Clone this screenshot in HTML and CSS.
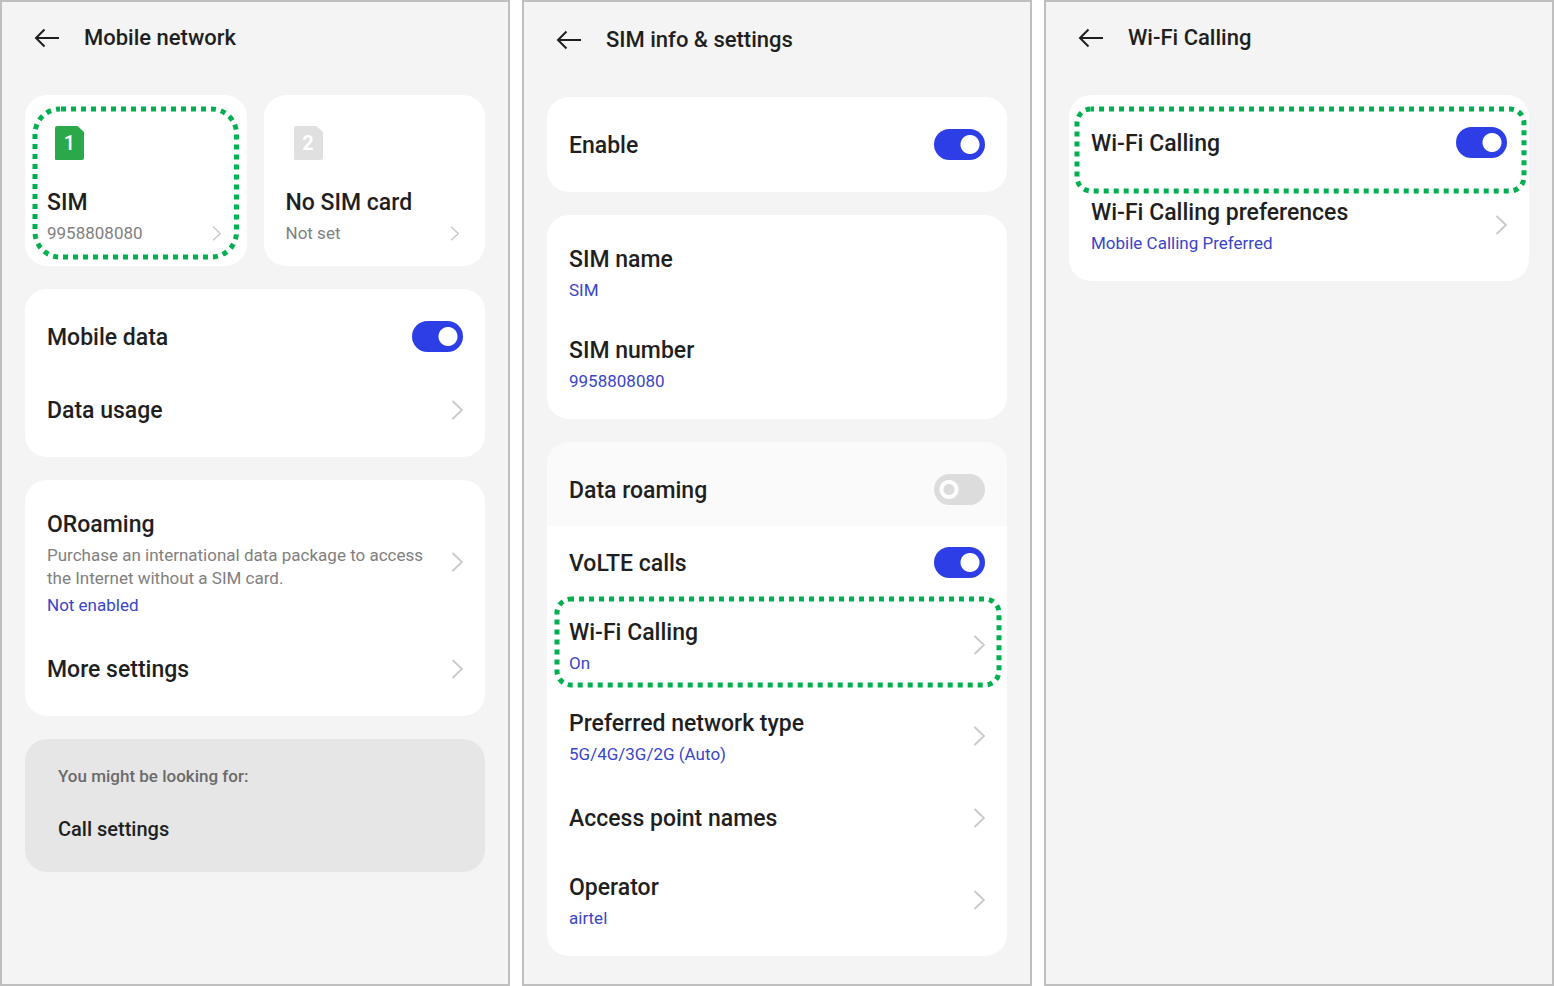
FILE: index.html
```
<!DOCTYPE html>
<html lang="en">
<head>
<meta charset="utf-8">
<meta name="viewport" content="width=device-width, initial-scale=1">
<title>Wi-Fi Calling setup</title>
<link rel="stylesheet" href="styles.css">
</head>
<body>
<svg class="defs" aria-hidden="true">
  <symbol id="back" viewBox="0 0 26 20"><path d="M10.5 1.5 2 10l8.500 8.500M2 10h23" fill="none" stroke="currentColor" stroke-width="2"/></symbol>
  <symbol id="chevron" viewBox="0 0 12 20"><path d="M1.500 1 11 10 1.500 19" fill="none" stroke="currentColor" stroke-width="1.900"/></symbol>
  <symbol id="sim" viewBox="0 0 29 34"><path d="M2 0h20.500L29 6v26a2 2 0 0 1-2 2H1a1 1 0 0 1-1-1V2a2 2 0 0 1 2-2z" fill="currentColor"/></symbol>
</svg>
<main class="board">
  <section class="screen">
    <header class="bar">
      <button class="back" aria-label="Back"><svg class="arrow"><use href="#back"/></svg></button>
      <h1 class="heading">Mobile network</h1>
    </header>
    <div class="stack">
      <div class="sims">
        <button class="card sim">
          <span class="badge badge-on"><svg class="badge-shape"><use href="#sim"/></svg><span class="badge-num">1</span></span>
          <span class="title">SIM</span>
          <span class="foot"><span class="note">9958808080</span><svg class="chev chev-small"><use href="#chevron"/></svg></span>
          <svg class="mark mark-sim" aria-hidden="true"><rect class="dots dots-round" width="100%" height="100%" rx="25"/></svg>
        </button>
        <button class="card sim">
          <span class="badge badge-off"><svg class="badge-shape"><use href="#sim"/></svg><span class="badge-num">2</span></span>
          <span class="title">No SIM card</span>
          <span class="foot"><span class="note">Not set</span><svg class="chev chev-small"><use href="#chevron"/></svg></span>
        </button>
      </div>
      <div class="card list">
        <label class="row"><span class="title">Mobile data</span><input class="switch" type="checkbox" role="switch" checked></label>
        <button class="row"><span class="title">Data usage</span><svg class="chev"><use href="#chevron"/></svg></button>
      </div>
      <div class="card list">
        <button class="row tall">
          <span class="text"><span class="title">ORoaming</span><span class="note">Purchase an international data package to access the Internet without a SIM card.</span><span class="value">Not enabled</span></span>
          <svg class="chev"><use href="#chevron"/></svg>
        </button>
        <button class="row"><span class="title">More settings</span><svg class="chev"><use href="#chevron"/></svg></button>
      </div>
      <aside class="hint">
        <p class="hint-label">You might be looking for:</p>
        <a class="hint-link" href="#call-settings">Call settings</a>
      </aside>
    </div>
  </section>

  <section class="screen">
    <header class="bar bar-low">
      <button class="back" aria-label="Back"><svg class="arrow"><use href="#back"/></svg></button>
      <h1 class="heading">SIM info &amp; settings</h1>
    </header>
    <div class="stack">
      <div class="card list">
        <label class="row"><span class="title">Enable</span><input class="switch" type="checkbox" role="switch" checked></label>
      </div>
      <div class="card list">
        <button class="row tall"><span class="text"><span class="title">SIM name</span><span class="value">SIM</span></span></button>
        <button class="row tall"><span class="text"><span class="title">SIM number</span><span class="value">9958808080</span></span></button>
      </div>
      <div class="card list list-muted">
        <label class="row row-muted"><span class="title">Data roaming</span><input class="switch" type="checkbox" role="switch" disabled></label>
        <label class="row"><span class="title">VoLTE calls</span><input class="switch" type="checkbox" role="switch" checked></label>
        <button class="row tall">
          <span class="text"><span class="title">Wi-Fi Calling</span><span class="value">On</span></span>
          <svg class="chev"><use href="#chevron"/></svg>
          <svg class="mark mark-row" aria-hidden="true"><rect class="dots" width="100%" height="100%" rx="14"/></svg>
        </button>
        <button class="row tall"><span class="text"><span class="title">Preferred network type</span><span class="value">5G/4G/3G/2G (Auto)</span></span><svg class="chev"><use href="#chevron"/></svg></button>
        <button class="row"><span class="title">Access point names</span><svg class="chev"><use href="#chevron"/></svg></button>
        <button class="row tall"><span class="text"><span class="title">Operator</span><span class="value">airtel</span></span><svg class="chev"><use href="#chevron"/></svg></button>
      </div>
    </div>
  </section>

  <section class="screen">
    <header class="bar">
      <button class="back" aria-label="Back"><svg class="arrow"><use href="#back"/></svg></button>
      <h1 class="heading">Wi-Fi Calling</h1>
    </header>
    <div class="stack">
      <div class="card list">
        <label class="row">
          <span class="title">Wi-Fi Calling</span><input class="switch" type="checkbox" role="switch" checked>
          <svg class="mark mark-toggle" aria-hidden="true"><rect class="dots" width="100%" height="100%" rx="14"/></svg>
        </label>
        <button class="row tall"><span class="text"><span class="title">Wi-Fi Calling preferences</span><span class="value">Mobile Calling Preferred</span></span><svg class="chev"><use href="#chevron"/></svg></button>
      </div>
    </div>
  </section>
</main>
</body>
</html>
```
FILE: styles.css
```
* { box-sizing: border-box; }
body {
  margin: 0;
  background: #fff;
  color: #1f1f1f;
  font-family: Roboto, "Liberation Sans", sans-serif;
}
button {
  border: 0;
  background: none;
  font: inherit;
  color: inherit;
  text-align: left;
  cursor: pointer;
}
.defs { display: none; }

.board {
  display: grid;
  grid-template-columns: repeat(3, 1fr);
  gap: 12px;
  min-height: 100vh;
}
.screen {
  border: 2px solid #bfbfbf;
  background: #f4f4f4;
  padding: 0 23px 23px;
}

.bar {
  display: flex;
  align-items: center;
  gap: 24px;
  padding: 20px 9px 42px;
}
.bar-low { padding-top: 22px; }
.back { display: flex; padding: 0; }
.arrow { width: 26px; height: 20px; }
.heading {
  margin: 0;
  font-size: 22px;
  line-height: 31px;
  font-weight: 500;
}

.stack { display: flex; flex-direction: column; gap: 23px; }
.card { background: #fff; border-radius: 22px; }
.list { padding: 11px 0; }

.row {
  position: relative;
  display: flex;
  align-items: center;
  justify-content: space-between;
  gap: 24px;
  width: 100%;
  min-height: 73px;
  padding: 0 22px;
}
.tall { padding-top: 16px; padding-bottom: 15px; }
.text { display: flex; flex-direction: column; gap: 4px; }
.title {
  padding-top: 2px;
  font-size: 23px;
  line-height: 31px;
  font-weight: 500;
}
.note, .value { font-size: 17px; line-height: 23px; }
.note { color: #808080; }
.value { color: #3a45c6; }
.list-muted { padding-top: 0; overflow: hidden; }
.row-muted { padding-top: 11px; min-height: 84px; background: #fafafa; }

.chev {
  flex: none;
  width: 12px;
  height: 20px;
  color: #c9c9c9;
}
.chev-small { width: 9px; height: 15px; }

.switch {
  appearance: none;
  flex: none;
  width: 51px;
  height: 31px;
  margin: 0;
  border-radius: 16px;
  background: radial-gradient(circle at 36px 50%, #fff 9px, #2d3ee6 10px);
}
.switch:disabled {
  background: radial-gradient(circle at 15px 50%, #dcdcdc 5px, #fff 6px, #fff 9px, #dcdcdc 10px);
}

.sims { display: grid; grid-template-columns: 1fr 1fr; gap: 17px; }
.sim {
  position: relative;
  display: flex;
  flex-direction: column;
  padding: 31px 26px 21px 22px;
}
.badge {
  display: grid;
  place-items: center;
  width: 29px;
  height: 34px;
  margin: 0 0 25px 8px;
}
.badge-shape, .badge-num { grid-area: 1 / 1; }
.badge-shape { width: 29px; height: 34px; }
.badge-num { color: #fff; font-size: 20px; line-height: 34px; font-weight: 500; }
.badge-on { color: #2ba84a; }
.badge-off { color: #e0e0e0; }
.badge-off .badge-num { font-weight: 700; }
.foot {
  display: flex;
  align-items: center;
  justify-content: space-between;
  margin-top: 4px;
}

.hint {
  display: flex;
  flex-direction: column;
  gap: 27px;
  padding: 26px 33px 28px;
  border-radius: 22px;
  background: #e6e6e6;
}
.hint-label {
  margin: 0;
  color: #6b6b6b;
  font-size: 17px;
  line-height: 23px;
  font-weight: 500;
}
.hint-link {
  color: inherit;
  font-size: 20px;
  line-height: 29px;
  font-weight: 500;
  text-decoration: none;
}

/* Dotted frames drawn over the settings to tap */
.mark { position: absolute; overflow: visible; pointer-events: none; }
.mark-sim { left: 10px; top: 14px; width: calc(100% - 20px); height: calc(100% - 23px); }
.mark-row { left: 10px; top: 0; width: calc(100% - 18px); height: calc(100% - 5px); }
.mark-toggle { left: 8px; top: 3px; width: calc(100% - 13px); height: calc(100% + 9px); }
.dots {
  fill: none;
  stroke: #00b050;
  stroke-width: 5;
  stroke-dasharray: 5 5;
  stroke-dashoffset: 2;
}
.dots-round { stroke-dashoffset: 9; }
```
